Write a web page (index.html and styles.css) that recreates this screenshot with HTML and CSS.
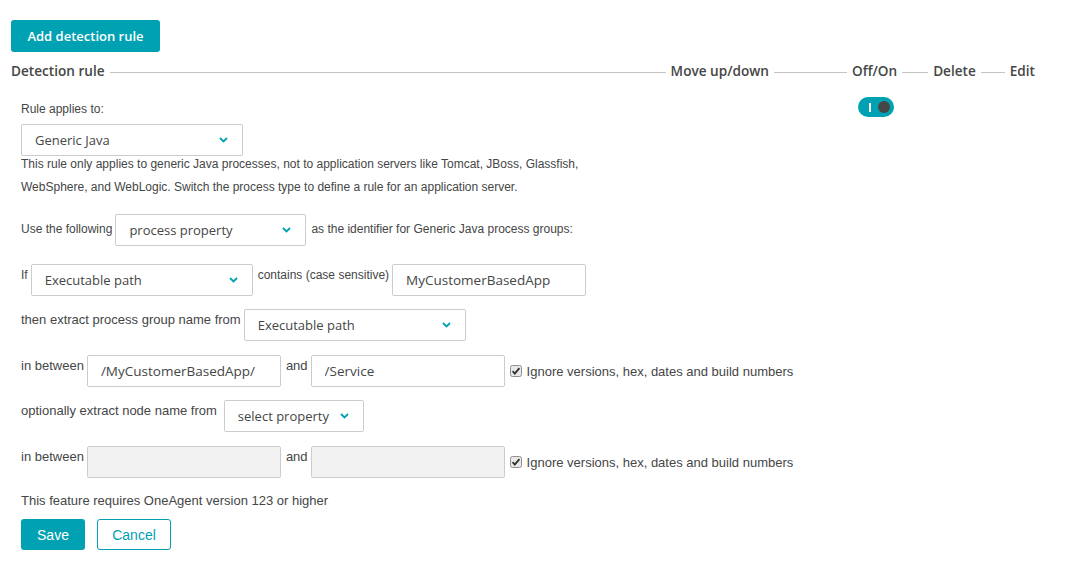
FILE: index.html
```html
<!DOCTYPE html>
<html>
<head>
<link rel="stylesheet" href="styles.css">
	<title>Process group detection</title>
	<meta name="viewport" content="width=device-width, initial-scale=1">
</head>
<body>
<div class="page">
	<button class="btnAdd">Add detection rule</button>

	<div class="ruleHeader">
		<span class="colTitle">Detection rule</span>
		<span class="headLine grow"></span>
		<span class="colTitle">Move up/down</span>
		<span class="headLine w73"></span>
		<span class="colTitle">Off/On</span>
		<span class="headLine w26"></span>
		<span class="colTitle">Delete</span>
		<span class="headLine w24"></span>
		<span class="colTitle">Edit</span>
	</div>

	<div class="rule">
		<div class="ruleForm">
			<div class="fieldLabel">Rule applies to:</div>
			<div class="select wGeneric">
				<span>Generic Java</span>
				<svg class="chevron" width="9" height="6" viewBox="0 0 9 6"><path d="M1 1 L4.5 4.5 L8 1" fill="none" stroke="#00a1b2" stroke-width="1.8"/></svg>
			</div>
			<p class="desc">This rule only applies to generic Java processes, not to application servers like Tomcat, JBoss, Glassfish,<br>WebSphere, and WebLogic. Switch the process type to define a rule for an application server.</p>

			<div class="row rowUse">
				<span class="txt txtSmall txtMid">Use the following</span>
				<div class="select wProp">
					<span>process property</span>
					<svg class="chevron" width="9" height="6" viewBox="0 0 9 6"><path d="M1 1 L4.5 4.5 L8 1" fill="none" stroke="#00a1b2" stroke-width="1.8"/></svg>
				</div>
				<span class="txt txtSmall txtMid">as the identifier for Generic Java process groups:</span>
			</div>

			<div class="row rowIf">
				<span class="txt txtSmall">If</span>
				<div class="select wGeneric">
					<span>Executable path</span>
					<svg class="chevron" width="9" height="6" viewBox="0 0 9 6"><path d="M1 1 L4.5 4.5 L8 1" fill="none" stroke="#00a1b2" stroke-width="1.8"/></svg>
				</div>
				<span class="txt txtSmall">contains (case sensitive)</span>
				<input class="textInput" type="text" value="MyCustomerBasedApp">
			</div>

			<div class="row">
				<span class="txt">then extract process group name from</span>
				<div class="select wGeneric">
					<span>Executable path</span>
					<svg class="chevron" width="9" height="6" viewBox="0 0 9 6"><path d="M1 1 L4.5 4.5 L8 1" fill="none" stroke="#00a1b2" stroke-width="1.8"/></svg>
				</div>
			</div>

			<div class="row rowGap14">
				<span class="txt">in between</span>
				<input class="textInput" type="text" value="/MyCustomerBasedApp/">
				<span class="txt">and</span>
				<input class="textInput" type="text" value="/Service">
				<label class="check">
					<svg class="checkBox" width="12" height="12" viewBox="0 0 12 12"><rect x="0.5" y="0.5" width="11" height="11" rx="2" fill="#e9e9e9" stroke="#8f8f8f"/><path d="M2.6 6.2 L4.8 8.6 L9.4 3.2" fill="none" stroke="#333" stroke-width="1.9"/></svg>
					Ignore versions, hex, dates and build numbers
				</label>
			</div>

			<div class="row">
				<span class="txt txtWide">optionally extract node name from</span>
				<div class="select selectAuto">
					<span>select property</span>
					<svg class="chevron" width="9" height="6" viewBox="0 0 9 6"><path d="M1 1 L4.5 4.5 L8 1" fill="none" stroke="#00a1b2" stroke-width="1.8"/></svg>
				</div>
			</div>

			<div class="row rowGap14">
				<span class="txt">in between</span>
				<input class="textInput" type="text" disabled>
				<span class="txt">and</span>
				<input class="textInput" type="text" disabled>
				<label class="check">
					<svg class="checkBox" width="12" height="12" viewBox="0 0 12 12"><rect x="0.5" y="0.5" width="11" height="11" rx="2" fill="#e9e9e9" stroke="#8f8f8f"/><path d="M2.6 6.2 L4.8 8.6 L9.4 3.2" fill="none" stroke="#333" stroke-width="1.9"/></svg>
					Ignore versions, hex, dates and build numbers
				</label>
			</div>

			<p class="note">This feature requires OneAgent version 123 or higher</p>

			<div class="formButtons">
				<button class="btnSave">Save</button>
				<button class="btnCancel">Cancel</button>
			</div>
		</div>

		<div class="ruleActions">
			<span class="toggle"><span class="toggleBar"></span><span class="toggleKnob"></span></span>
		</div>
	</div>
</div>
</body>
</html>
```

FILE: styles.css
```css
* {
	box-sizing: border-box;
}

body {
	margin: 0;
	background: #fff;
	color: #454646;
	font-family: "Liberation Sans", Arial, sans-serif;
	font-size: 12px;
}

.page {
	padding: 20px 33px 20px 11px;
}

button {
	font-family: inherit;
	cursor: pointer;
}

.btnAdd {
	height: 32px;
	width: 149px;
	padding: 0;
	border: none;
	border-radius: 3px;
	background: #00a1b2;
	color: #fff;
	font-family: "Open Sans", sans-serif;
	font-weight: 600;
	font-size: 13px;
}

/* header with the column titles */
.ruleHeader {
	display: flex;
	align-items: center;
	height: 20px;
	margin-top: 8px;
}

.colTitle {
	font-family: "Open Sans", sans-serif;
	font-weight: 600;
	font-size: 13.6px;
	color: #454646;
	white-space: nowrap;
}

.headLine {
	height: 1px;
	background: #c4c4c4;
	margin: 5px 5px 0 5px;
}

.grow { flex: 1; }
.w73 { width: 73px; }
.w26 { width: 26px; }
.w24 { width: 24px; }

/* rule body */
.rule {
	display: flex;
}

.ruleForm {
	flex: 1;
	padding: 21px 0 0 10px;
}

.ruleActions {
	width: 184px;
	padding: 17px 0 0 7px;
}

.toggle {
	position: relative;
	display: block;
	width: 36px;
	height: 20px;
	border-radius: 10px;
	background: #00a1b2;
}

.toggleBar {
	position: absolute;
	left: 11px;
	top: 6px;
	width: 1.5px;
	height: 9px;
	background: #fff;
}

.toggleKnob {
	position: absolute;
	right: 4px;
	top: 4px;
	width: 12px;
	height: 12px;
	border-radius: 50%;
	background: #454646;
}

.fieldLabel {
	line-height: 16px;
	margin-bottom: 7px;
}

.select {
	display: flex;
	align-items: center;
	justify-content: space-between;
	height: 32px;
	padding: 0 14px 0 13px;
	border: 1px solid #cccccc;
	border-radius: 2px;
	background: #fff;
	font-family: "Open Sans", sans-serif;
	font-size: 13px;
	color: #454646;
	flex-shrink: 0;
}

.wGeneric { width: 222px; }
.wProp { width: 191px; }
.selectAuto {
	width: 140px;
}

.chevron {
	flex-shrink: 0;
}

.desc {
	margin: -3px 0 0;
	line-height: 23px;
}

.row {
	display: flex;
	align-items: flex-start;
	margin-top: 13px;
}

.rowUse { margin-top: 15px; }
.rowIf { margin-top: 18px; }
.rowGap14 { margin-top: 14px; }

.txt {
	font-size: 13px;
	line-height: 16px;
	padding-top: 3px;
	margin: 0 3px 0 0;
	white-space: nowrap;
}

.txtSmall { font-size: 12px; }

.select + .txt,
.textInput + .txt {
	margin-left: 5px;
}

.txtMid { padding-top: 7px; }
.txtWide { margin-right: 7px; }

.textInput {
	width: 194px;
	height: 32px;
	padding: 0 13px;
	border: 1px solid #cccccc;
	border-radius: 2px;
	font-family: "Open Sans", sans-serif;
	font-size: 13.5px;
	color: #454646;
	background: #fff;
	outline: none;
}

.textInput:disabled {
	background: #f2f2f2;
}

.check {
	display: flex;
	align-items: center;
	gap: 5px;
	height: 32px;
	margin-left: 5px;
	font-size: 13px;
	white-space: nowrap;
}

.note {
	margin: 15px 0 0;
	font-size: 13px;
	line-height: 16px;
}

.formButtons {
	display: flex;
	gap: 12px;
	margin-top: 10px;
}

.btnSave,
.btnCancel {
	height: 31px;
	padding: 0;
	border-radius: 3px;
	font-size: 14px;
}

.btnSave {
	width: 64px;
	border: none;
	background: #00a1b2;
	color: #fff;
}

.btnCancel {
	width: 74px;
	border: 1px solid #00a1b2;
	background: #fff;
	color: #00a1b2;
}
```
